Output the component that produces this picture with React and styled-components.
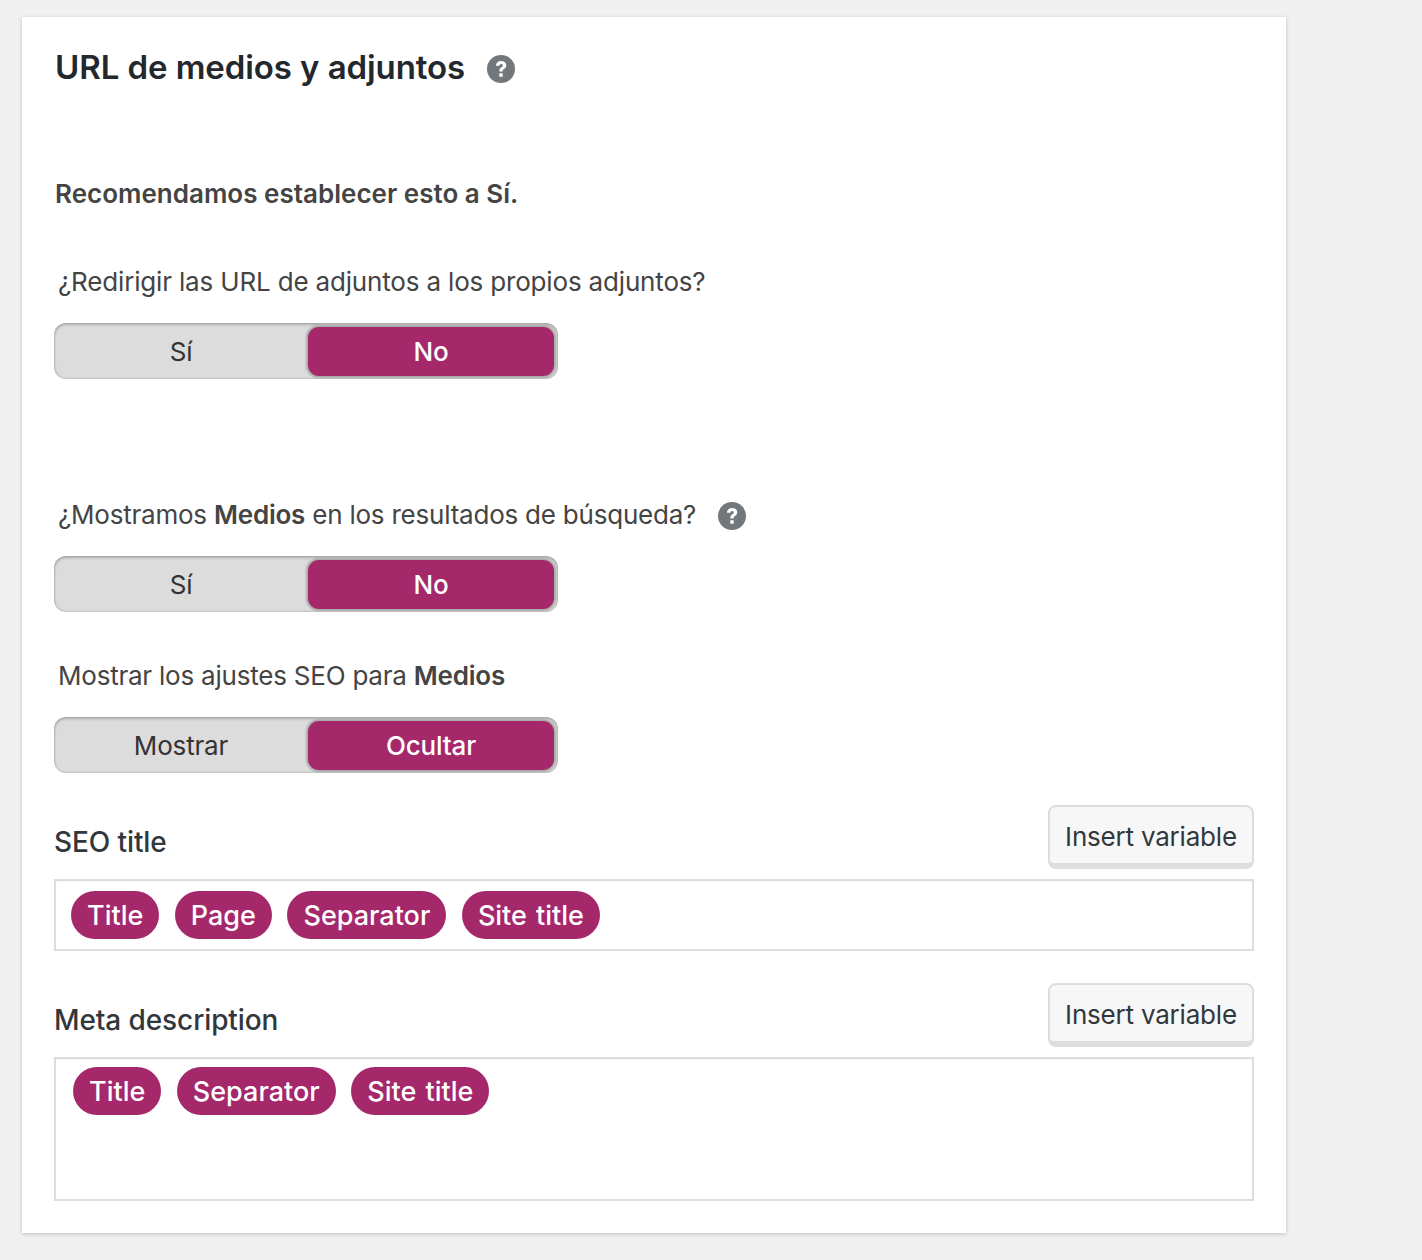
import styled, { createGlobalStyle } from "styled-components";

const GlobalStyle = createGlobalStyle`
    html, body {
        margin: 0;
        padding: 0;
        background: #f0f0f0;
    }

    body {
        font-family: Inter, "Liberation Sans", sans-serif;
        color: #444;
    }
`;

const HelpIcon = ({ size = 28 }) => (
    <HelpSvg width={size} height={size} viewBox="0 0 28 28">
        <circle cx="14" cy="14" r="14" fill="#72777c" />
        <path
            d="M8.9 10.8c.2-3 2.3-4.8 5.3-4.8 3 0 5.1 1.8 5.1 4.2 0 1.8-1 2.8-2.3 3.7-1 .7-1.4 1.2-1.4 2.2v.5h-3.2v-.8c0-1.7.7-2.6 1.9-3.5 1-.7 1.5-1.2 1.5-1.9 0-.9-.7-1.5-1.6-1.5-1 0-1.7.7-1.8 1.9z"
            fill="#fff"
        />
        <rect x="12.3" y="18.2" width="3.4" height="3.6" rx=".5" fill="#fff" />
    </HelpSvg>
);

const Toggle = ({ left, right, top = 25 }) => (
    <ToggleWrap $top={top}>
        <ToggleOption>{left}</ToggleOption>
        <ToggleOption $active>{right}</ToggleOption>
    </ToggleWrap>
);

const App = () => {
    return (
        <>
            <GlobalStyle />
            <Page>
                <Card>
                    <TitleRow>
                        <Title>URL de medios y adjuntos</Title>
                        <HelpIcon />
                    </TitleRow>
                    <Recommend>Recomendamos establecer esto a Sí.</Recommend>

                    <Question $top={56}>¿Redirigir las URL de adjuntos a los propios adjuntos?</Question>
                    <Toggle left="Sí" right="No" />

                    <Question $top={120} $spacing={-0.22}>
                        <span>¿Mostramos <b>Medios</b> en los resultados de búsqueda?</span>
                        <HelpIcon />
                    </Question>
                    <Toggle left="Sí" right="No" />

                    <Question $top={48} $spacing={-0.22}>
                        <span>Mostrar los ajustes SEO para <b>Medios</b></span>
                    </Question>
                    <Toggle left="Mostrar" right="Ocultar" />

                    <FieldHeader $top={32}>
                        <FieldLabel>SEO title</FieldLabel>
                        <InsertButton>Insert variable</InsertButton>
                    </FieldHeader>
                    <Editor $height={72} $padLeft={15} $padTop={10}>
                        <Pill>Title</Pill>
                        <Pill>Page</Pill>
                        <Pill>Separator</Pill>
                        <Pill>Site title</Pill>
                    </Editor>

                    <FieldHeader $top={32}>
                        <FieldLabel>Meta description</FieldLabel>
                        <InsertButton>Insert variable</InsertButton>
                    </FieldHeader>
                    <Editor $height={144} $padLeft={17} $padTop={8}>
                        <Pill>Title</Pill>
                        <Pill>Separator</Pill>
                        <Pill>Site title</Pill>
                    </Editor>
                </Card>
            </Page>
        </>
    );
};

const Page = styled.div`
    width: 1422px;
    height: 1260px;
    box-sizing: border-box;
    padding: 17px 0 0 22px;
    overflow: hidden;
`;

const Card = styled.div`
    width: 1264px;
    height: 1216px;
    box-sizing: border-box;
    padding: 32px 32px 0 32px;
    background: #fff;
    box-shadow: 0 1px 4px rgba(0, 0, 0, 0.2);
`;

const TitleRow = styled.div`
    display: flex;
    align-items: center;
    gap: 22px;
    height: 38px;
    padding-left: 1px;
`;

const Title = styled.h2`
    margin: 0 0 2px;
    font-size: 33px;
    line-height: 36px;
    font-weight: 600;
    letter-spacing: -0.08px;
    color: #23282d;
`;

const HelpSvg = styled.svg`
    display: block;
    flex-shrink: 0;
    margin-top: 2px;
`;

const Recommend = styled.p`
    margin: 91px 0 0 1px;
    font-size: 26px;
    line-height: 32px;
    font-weight: 600;
    letter-spacing: 0.01px;
    color: #444;
`;

const Question = styled.div`
    display: flex;
    align-items: center;
    gap: 22px;
    height: 32px;
    margin-top: ${({ $top }) => $top}px;
    padding-left: 4px;
    font-size: 26px;
    line-height: 32px;
    letter-spacing: ${({ $spacing = -0.17 }) => $spacing}px;
    color: #444;

    b {
        font-weight: 600;
    }
`;

const ToggleWrap = styled.div`
    display: grid;
    grid-template-columns: 252px 252px;
    width: 504px;
    height: 56px;
    box-sizing: border-box;
    margin-top: ${({ $top }) => $top}px;
    background: #dcdcdc;
    border-radius: 12px;
    box-shadow: inset 0 2px 3px rgba(0, 0, 0, 0.18), inset 0 0 2px 1px rgba(0, 0, 0, 0.12);
`;

const ToggleOption = styled.div`
    display: flex;
    align-items: center;
    justify-content: center;
    padding: 1px 0 0 2px;
    font-size: 26px;
    letter-spacing: -0.17px;
    color: #333;

    ${({ $active }) =>
        $active &&
        `
        margin: 4px 4px 3px 2px;
        padding: 0;
        color: #fff;
        font-weight: 500;
        background: #a4286a;
        border-radius: 11px;
        box-shadow: 0 0 2px 2px #a8a8a8;
    `}
`;

const FieldHeader = styled.div`
    display: flex;
    align-items: flex-end;
    justify-content: space-between;
    margin-top: ${({ $top }) => $top}px;
    margin-bottom: 10px;
`;

const FieldLabel = styled.label`
    font-size: 28px;
    line-height: 34px;
    font-weight: 500;
    letter-spacing: -0.1px;
    color: #32373c;
    margin-bottom: 10px;
`;

const InsertButton = styled.button`
    width: 206px;
    height: 64px;
    box-sizing: border-box;
    padding: 2px 0 0;
    background: #f7f7f7;
    border: 2px solid #dddddd;
    border-bottom-width: 6px;
    border-radius: 8px;
    font-family: inherit;
    font-size: 26px;
    letter-spacing: -0.2px;
    color: #32373c;
`;

const Editor = styled.div`
    display: flex;
    align-items: flex-start;
    gap: 15.5px;
    width: 1200px;
    height: ${({ $height }) => $height}px;
    box-sizing: border-box;
    padding: ${({ $padTop }) => $padTop}px 0 0 ${({ $padLeft }) => $padLeft}px;
    border: 2px solid #ddd;
    background: #fff;
    box-shadow: inset 0 1px 2px rgba(0, 0, 0, 0.04);
`;

const Pill = styled.span`
    display: inline-flex;
    align-items: center;
    height: 48px;
    padding: 0 16px;
    border-radius: 24px;
    background: #a4286a;
    color: #fff;
    font-size: 27px;
    font-weight: 500;
    word-spacing: 2px;
`;

export default App;
